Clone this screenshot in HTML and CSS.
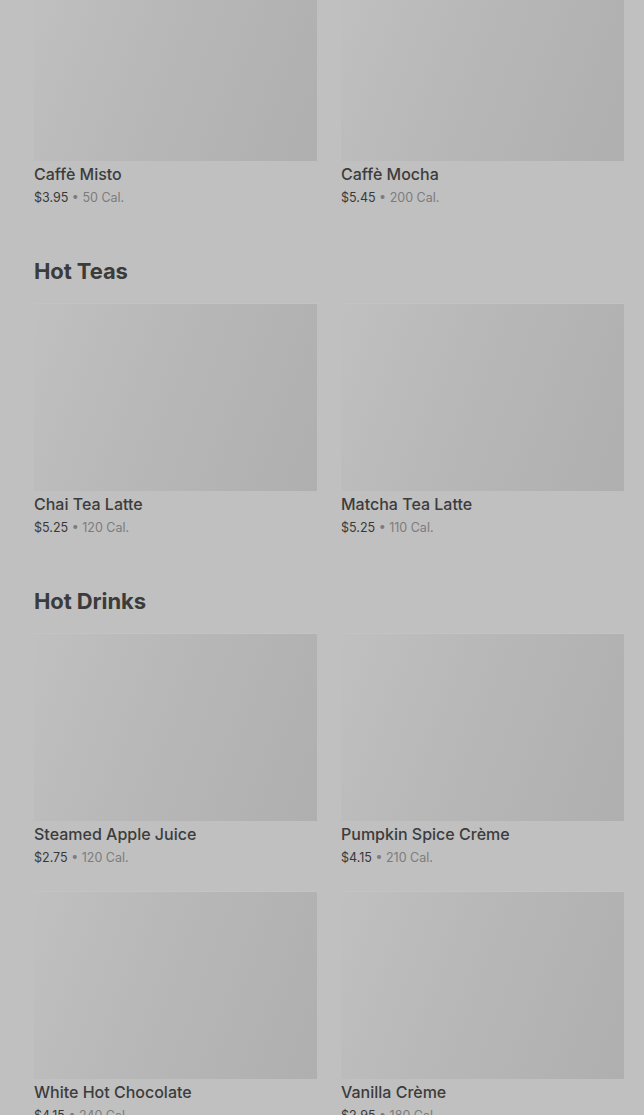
FILE: index.html
```html
<!DOCTYPE html>
<html lang="en">

<head>
    <meta charset="UTF-8">
    <meta name="viewport" content="width=device-width, initial-scale=1.0">
    <title>Menu</title>
    <link rel="stylesheet" href="styles.css">
</head>

<body>
    <main class="menu">
        <!-- Hot Coffees (scrolled past heading) -->
        <section class="menu-section first">
            <div class="product-grid">
                <div class="product-card">
                    <div class="product-image"></div>
                    <div class="product-name">Caffè Misto</div>
                    <div class="product-meta"><span class="price">$3.95</span> • 50 Cal.</div>
                </div>
                <div class="product-card">
                    <div class="product-image"></div>
                    <div class="product-name">Caffè Mocha</div>
                    <div class="product-meta"><span class="price">$5.45</span> • 200 Cal.</div>
                </div>
            </div>
        </section>

        <section class="menu-section">
            <h2 class="section-title">Hot Teas</h2>
            <div class="product-grid">
                <div class="product-card">
                    <div class="product-image"></div>
                    <div class="product-name">Chai Tea Latte</div>
                    <div class="product-meta"><span class="price">$5.25</span> • 120 Cal.</div>
                </div>
                <div class="product-card">
                    <div class="product-image"></div>
                    <div class="product-name">Matcha Tea Latte</div>
                    <div class="product-meta"><span class="price">$5.25</span> • 110 Cal.</div>
                </div>
            </div>
        </section>

        <section class="menu-section">
            <h2 class="section-title">Hot Drinks</h2>
            <div class="product-grid">
                <div class="product-card">
                    <div class="product-image"></div>
                    <div class="product-name">Steamed Apple Juice</div>
                    <div class="product-meta"><span class="price">$2.75</span> • 120 Cal.</div>
                </div>
                <div class="product-card">
                    <div class="product-image"></div>
                    <div class="product-name">Pumpkin Spice Crème</div>
                    <div class="product-meta"><span class="price">$4.15</span> • 210 Cal.</div>
                </div>
                <div class="product-card">
                    <div class="product-image"></div>
                    <div class="product-name">White Hot Chocolate</div>
                    <div class="product-meta"><span class="price">$4.15</span> • 240 Cal.</div>
                </div>
                <div class="product-card">
                    <div class="product-image"></div>
                    <div class="product-name">Vanilla Crème</div>
                    <div class="product-meta"><span class="price">$2.95</span> • 180 Cal.</div>
                </div>
            </div>
        </section>
    </main>
</body>

</html>
```

FILE: styles.css
```css
body {
    margin: 0;
    background: #c0c0c0;
    font-family: 'Inter', 'Roboto', sans-serif;
    color: #3a3a3a;
    overflow: hidden;
}

.menu {
    padding: 0 20px 0 34px;
    margin-top: -27px;
}

.menu-section {
    margin-top: 50px;
}

.menu-section.first {
    margin-top: 0;
}

.section-title {
    margin: 0 0 19px;
    font-size: 22px;
    line-height: 26px;
    font-weight: 700;
    letter-spacing: -0.1px;
    color: #3b3b3b;
}

.product-grid {
    display: grid;
    grid-template-columns: 1fr 1fr;
    column-gap: 24px;
    row-gap: 23px;
}

.product-image {
    height: 188px;
    background: linear-gradient(110deg, #c0c0c0 0%, #b8b8b8 40%, #afafaf 100%);
    border-top: 1px solid #c3c3c3;
    box-sizing: border-box;
}

.product-name {
    margin-top: 3px;
    font-size: 16px;
    line-height: 20px;
    font-weight: 500;
    color: #3c3c3c;
}

.product-meta {
    margin-top: 4px;
    font-size: 12.5px;
    line-height: 20px;
    color: #7c7c7c;
}

.price {
    color: #383838;
}
```
